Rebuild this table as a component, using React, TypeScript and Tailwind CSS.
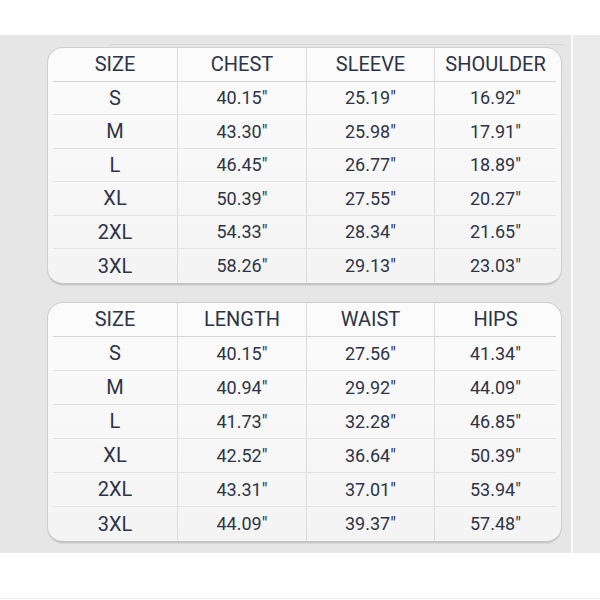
import React from "react";

const top = {
  headers: ["SIZE", "CHEST", "SLEEVE", "SHOULDER"],
  rows: [
    ["S", "40.15\u2033", "25.19\u2033", "16.92\u2033"],
    ["M", "43.30\u2033", "25.98\u2033", "17.91\u2033"],
    ["L", "46.45\u2033", "26.77\u2033", "18.89\u2033"],
    ["XL", "50.39\u2033", "27.55\u2033", "20.27\u2033"],
    ["2XL", "54.33\u2033", "28.34\u2033", "21.65\u2033"],
    ["3XL", "58.26\u2033", "29.13\u2033", "23.03\u2033"],
  ],
};

const bottom = {
  headers: ["SIZE", "LENGTH", "WAIST", "HIPS"],
  rows: [
    ["S", "40.15\u2033", "27.56\u2033", "41.34\u2033"],
    ["M", "40.94\u2033", "29.92\u2033", "44.09\u2033"],
    ["L", "41.73\u2033", "32.28\u2033", "46.85\u2033"],
    ["XL", "42.52\u2033", "36.64\u2033", "50.39\u2033"],
    ["2XL", "43.31\u2033", "37.01\u2033", "53.94\u2033"],
    ["3XL", "44.09\u2033", "39.37\u2033", "57.48\u2033"],
  ],
};

function Row({ cells, header, last, h }: { cells: string[]; header?: boolean; last?: boolean; h: string }) {
  return (
    <div
      className={`grid grid-cols-[125px_129px_128px_1fr] ${h} ${
        last ? "" : header ? "border-b border-[#d6d6d8]" : "border-b border-[#e2e2e4]"
      }`}
    >
      {cells.map((c, i) => (
        <div
          key={i}
          className={`flex items-center justify-center ${
            header ? "text-[20px]" : i === 0 ? "text-[20px]" : "text-[18px]"
          } ${i < 3 ? "border-r border-[#dcdcde]" : ""}`}
        >
          {c}
        </div>
      ))}
    </div>
  );
}

function Card({ data, h }: { data: { headers: string[]; rows: string[][] }; h: string }) {
  return (
    <div className="w-[515px] rounded-[16px] border border-[#cfcfd1] border-b-2 border-b-[#c4c4c6] bg-gradient-to-b from-[#fbfbfb] to-[#f4f4f5] px-[5px] text-[#2e3447] shadow-[0_1px_1px_rgba(0,0,0,0.06)]">
      <Row cells={data.headers} header h={h} />
      {data.rows.map((r, i) => (
        <Row key={i} cells={r} last={i === data.rows.length - 1} h={h} />
      ))}
    </div>
  );
}

export default function App() {
  return (
    <div
      className="w-[600px] h-[600px] bg-white flex flex-col"
      style={{ fontFamily: "Roboto, 'Noto Sans', sans-serif" }}
    >
      <div className="h-[35px] shrink-0" />
      <div className="h-[518px] shrink-0 flex bg-[#e6e6e7]">
        <div className="w-[571px] flex flex-col pl-[47px] pt-[12px]">
          <div className="relative">
            <div className="absolute left-[62px] right-[6px] top-[-3px] h-[4px] rounded-t-[10px] border-t border-[#d6d6d8]" />
            <Card data={top} h="h-[33.5px]" />
          </div>
          <div className="h-[17px]" />
          <Card data={bottom} h="h-[34px]" />
        </div>
        <div className="w-[2px] bg-[#fafafa]" />
        <div className="flex-1 bg-[#ebebec]" />
      </div>
      <div className="flex-1" />
      <div className="h-[1px] bg-[#ececec]" />
      <div className="h-[1px]" />
    </div>
  );
}
